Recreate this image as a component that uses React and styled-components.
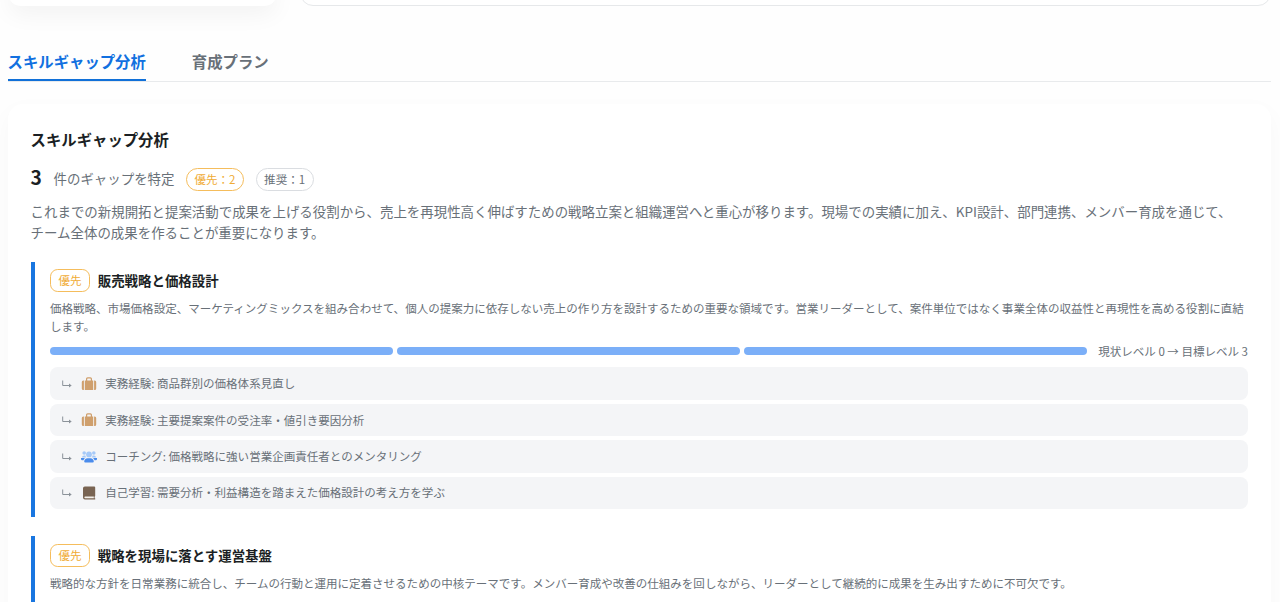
import React from "react";
import styled, { createGlobalStyle } from "styled-components";

const GlobalStyle = createGlobalStyle`
  * {
    box-sizing: border-box;
  }
  body {
    margin: 0;
    background: #fefefe;
    color: #1b1f24;
    font-family: "Noto Sans CJK JP", "Noto Sans", sans-serif;
    line-break: strict;
    overflow: hidden;
  }
  h2, h3, p, ul {
    margin: 0;
    padding: 0;
  }
`;

const Page = styled.div`
  height: 602px;
  padding: 0 9px 0 7.6px;
  overflow: hidden;
`;

const TopCards = styled.div`
  display: flex;
  gap: 23px;
  height: 6px;
`;

const ProfileCard = styled.div`
  width: 269px;
  height: 26px;
  margin-top: -20px;
  background: #fff;
  border-radius: 15px;
  box-shadow: 0 8px 23px rgba(0, 0, 0, 0.05);
`;

const SummaryCard = styled.div`
  flex: 1;
  height: 26px;
  margin-top: -20px;
  background: #fff;
  border: 1px solid #e6e8ea;
  border-radius: 15px;
`;

const Tabs = styled.div`
  display: flex;
  gap: 46px;
  height: 38px;
  margin-top: 38px;
  border-bottom: 1px solid #e8eaec;
`;

const Tab = styled.div`
  height: 37px;
  line-height: 35px;
  font-size: 15.36px;
  font-weight: 700;
  color: ${({ $active }) => ($active ? "#1170e0" : "#687078")};
  border-bottom: 2px solid ${({ $active }) => ($active ? "#1170d8" : "transparent")};
`;

const Panel = styled.section`
  height: 560px;
  margin-top: 22px;
  padding: 23px;
  background: #fff;
  border-radius: 15px;
  box-shadow: 0 8px 23px rgba(0, 0, 0, 0.03);
`;

const PanelTitle = styled.h2`
  font-size: 15.36px;
  line-height: 24px;
  font-weight: 700;
`;

const Summary = styled.div`
  display: flex;
  align-items: center;
  gap: 11.6px;
  height: 28px;
  margin-top: 14px;
`;

const Count = styled.span`
  font-size: 19.2px;
  line-height: 28px;
  font-weight: 700;
  margin-top: -5px;
`;

const CountLabel = styled.span`
  font-size: 13.44px;
  line-height: 20px;
  margin-top: -2px;
  color: #687078;
`;

const Badge = styled.span`
  display: inline-flex;
  align-items: center;
  height: 23px;
  padding: 0 7.5px;
  font-size: 11.52px;
  line-height: 17px;
  color: ${({ $priority }) => ($priority ? "#f0ac35" : "#687078")};
  border: 1px solid ${({ $priority }) => ($priority ? "#f5bd5c" : "#dadde1")};
  border-radius: ${({ $square }) => ($square ? "7.7px" : "12px")};
`;

const Intro = styled.p`
  margin-top: 8.4px;
  font-size: 13.44px;
  line-height: 20.16px;
  color: #687078;
`;

const Gap = styled.article`
  margin-top: 20px;
  padding: 7.7px 0 7.4px 15.4px;
  border-left: 4px solid #1976e0;

  & + & {
    margin-top: 19.2px;
  }
`;

const GapHeader = styled.div`
  display: flex;
  align-items: center;
  gap: 7.7px;
`;

const GapTitle = styled.h3`
  font-size: 13.44px;
  line-height: 20px;
  font-weight: 700;
  margin-top: -1px;
`;

const GapText = styled.p`
  margin-top: 8.1px;
  font-size: 11.52px;
  line-height: 17.28px;
  color: #687078;
`;

const Levels = styled.div`
  display: flex;
  align-items: center;
  gap: 11.5px;
  height: 17px;
  margin-top: 7.7px;
`;

const LevelTrack = styled.div`
  display: flex;
  flex: 1;
  gap: 3.84px;
`;

const LevelStep = styled.div`
  flex: 1;
  height: 7.7px;
  background: #7baff8;
  border-radius: 4px;
`;

const LevelLabel = styled.span`
  font-size: 11.52px;
  line-height: 17.28px;
  color: #687078;
  white-space: nowrap;
`;

const Actions = styled.ul`
  display: grid;
  gap: 3.84px;
  margin-top: 7.7px;
  list-style: none;
`;

const Action = styled.li`
  display: flex;
  align-items: center;
  height: 32.6px;
  padding: 0 11.5px;
  font-size: 11.52px;
  line-height: 17px;
  color: #687078;
  background: #f4f5f7;
  border-radius: 7.7px;

  svg {
    flex: none;
  }
`;

const ActionIcon = styled.span`
  display: flex;
  margin: 0 8px 0 7.7px;
`;

const HookArrow = () => (
  <svg width="12" height="12" viewBox="0 0 12 12" fill="none" stroke="#8b9299">
    <path d="M1.700 2.500v5h8" strokeWidth="1" />
    <path d="M8 5.500 10.700 7.500 8 9.500z" fill="#8b9299" stroke="none" />
  </svg>
);

const Suitcase = () => (
  <svg width="16" height="16" viewBox="0 0 16 16" fill="#cf9f6c">
    <path d="M2.900 4.500v9.500H2.300A1.500 1.500 0 0 1 .8 12.500V6A1.500 1.500 0 0 1 2.300 4.500z" />
    <path d="M13.100 4.500v9.500h.6a1.500 1.500 0 0 0 1.500-1.500V6a1.500 1.500 0 0 0-1.500-1.500z" />
    <path
      fillRule="evenodd"
      d="M3.800 4.500H5V2.800A1.600 1.600 0 0 1 6.600 1.200h2.800A1.600 1.600 0 0 1 11 2.800v1.700h1.200V14H3.800zM6.200 4.500h3.600V2.900a.5.5 0 0 0-.5-.5H6.700a.5.5 0 0 0-.5.5z"
    />
  </svg>
);

const People = () => (
  <svg width="16" height="16" viewBox="0 0 16 16">
    <g fill="#a5c9f8">
      <circle cx="3.200" cy="4" r="1.800" />
      <circle cx="12.800" cy="4" r="1.800" />
      <circle cx="8" cy="5.400" r="2.900" />
      <path d="M1 8.600a2.200 2.200 0 0 1 2.200-2.200h1.200l.6 2.200zM15 8.600a2.200 2.200 0 0 0-2.200-2.200h-1.200L11 8.600z" />
    </g>
    <g fill="#4a8cec">
      <path d="M3.200 12.600C3.200 10.600 4.700 9.300 6.500 9.300h3c1.800 0 3.300 1.300 3.300 3.300a1 1 0 0 1-1 1H4.200a1 1 0 0 1-1-1z" />
      <path d="M0 9h4A5 5 0 0 0 2.500 11.300H1.300A1.300 1.300 0 0 1 0 10zM16 9h-4a5 5 0 0 1 1.500 2.300h1.200A1.300 1.300 0 0 0 16 10z" />
    </g>
  </svg>
);

const Book = () => (
  <svg width="16" height="16" viewBox="0 0 16 16">
    <path
      fill="#796452"
      d="M3.800 1.500h9.400a1 1 0 0 1 1 1v8.300a1 1 0 0 1-.6.900v1.600h.6v1.200H4a2 2 0 0 1-2-2V3.300a1.800 1.800 0 0 1 1.800-1.800z"
    />
    <path fill="#f4f0ea" d="M4.200 11.600h8.600v1.600H4.200a.8.8 0 0 1 0-1.600z" />
  </svg>
);

const icons = {
  experience: Suitcase,
  coaching: People,
  study: Book,
};

const gaps = [
  {
    title: "販売戦略と価格設計",
    text: "価格戦略、市場価格設定、マーケティングミックスを組み合わせて、個人の提案力に依存しない売上の作り方を設計するための重要な領域です。営業リーダーとして、案件単位ではなく事業全体の収益性と再現性を高める役割に直結します。",
    current: 0,
    target: 3,
    actions: [
      { type: "experience", text: "実務経験: 商品群別の価格体系見直し" },
      { type: "experience", text: "実務経験: 主要提案案件の受注率・値引き要因分析" },
      { type: "coaching", text: "コーチング: 価格戦略に強い営業企画責任者とのメンタリング" },
      { type: "study", text: "自己学習: 需要分析・利益構造を踏まえた価格設計の考え方を学ぶ" },
    ],
  },
  {
    title: "戦略を現場に落とす運営基盤",
    text: "戦略的な方針を日常業務に統合し、チームの行動と運用に定着させるための中核テーマです。メンバー育成や改善の仕組みを回しながら、リーダーとして継続的に成果を生み出すために不可欠です。",
    actions: [],
  },
];

const GapItem = ({ gap }) => (
  <Gap>
    <GapHeader>
      <Badge $priority $square>優先</Badge>
      <GapTitle>{gap.title}</GapTitle>
    </GapHeader>
    <GapText>{gap.text}</GapText>
    {gap.target && (
      <Levels>
        <LevelTrack>
          {Array.from({ length: gap.target }, (_, i) => (
            <LevelStep key={i} />
          ))}
        </LevelTrack>
        <LevelLabel>
          {`現状レベル ${gap.current} → 目標レベル ${gap.target}`}
        </LevelLabel>
      </Levels>
    )}
    <Actions>
      {gap.actions.map((action) => {
        const Icon = icons[action.type];
        return (
          <Action key={action.text}>
            <HookArrow />
            <ActionIcon>
              <Icon />
            </ActionIcon>
            {action.text}
          </Action>
        );
      })}
    </Actions>
  </Gap>
);

export default function App() {
  return (
    <Page lang="ja">
      <GlobalStyle />
      <TopCards>
        <ProfileCard />
        <SummaryCard />
      </TopCards>
      <Tabs>
        <Tab $active>スキルギャップ分析</Tab>
        <Tab>育成プラン</Tab>
      </Tabs>
      <Panel>
        <PanelTitle>スキルギャップ分析</PanelTitle>
        <Summary>
          <Count>3</Count>
          <CountLabel>件のギャップを特定</CountLabel>
          <Badge $priority>優先：2</Badge>
          <Badge>推奨：1</Badge>
        </Summary>
        <Intro>
          これまでの新規開拓と提案活動で成果を上げる役割から、売上を再現性高く伸ばすための戦略立案と組織運営へと重心が移ります。現場での実績に加え、KPI設計、部門連携、メンバー育成を通じて、チーム全体の成果を作ることが重要になります。
        </Intro>
        {gaps.map((gap) => (
          <GapItem key={gap.title} gap={gap} />
        ))}
      </Panel>
    </Page>
  );
}
